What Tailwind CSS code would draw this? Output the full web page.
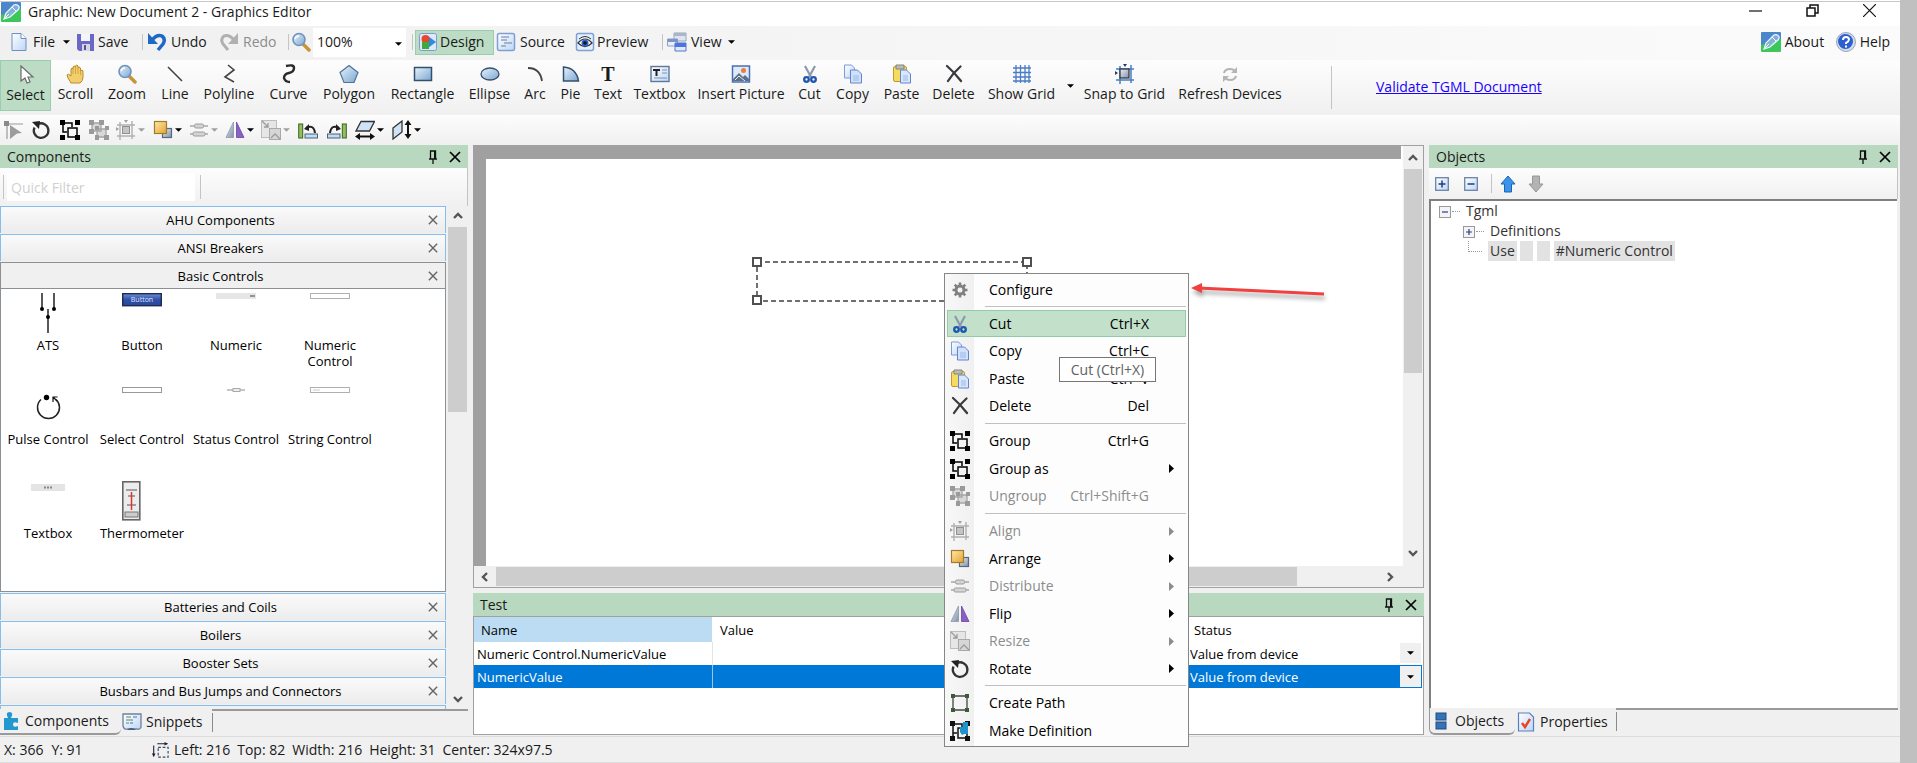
<!DOCTYPE html>
<html lang="en">
<head>
  <meta charset="UTF-8">
  <title>Graphic: New Document 2 - Graphics Editor</title>
  <script src="https://cdn.jsdelivr.net/npm/@tailwindcss/browser@4"></script>
</head>
<body class="flex h-screen overflow-hidden pr-[17px] bg-[#c0c0c0] font-['Open_Sans','Noto_Sans',sans-serif] text-[14px] leading-5 text-[#1a1a1a]">

  <!-- Icon sprite -->
  <svg class="absolute w-0 h-0" aria-hidden="true">
    <defs>
      <linearGradient id="gBlue" x1="0" y1="0" x2="1" y2="1"><stop offset="0" stop-color="#e8f3fc"/><stop offset="1" stop-color="#7ba6d2"/></linearGradient>
      <linearGradient id="gPage" x1="0" y1="0" x2="1" y2="1"><stop offset="0" stop-color="#ffffff"/><stop offset="1" stop-color="#bcd6f7"/></linearGradient>
      <linearGradient id="gGold" x1="0" y1="0" x2="1" y2="1"><stop offset="0" stop-color="#fdeaa8"/><stop offset="1" stop-color="#e3a32e"/></linearGradient>
      <linearGradient id="gGrey" x1="0" y1="0" x2="1" y2="1"><stop offset="0" stop-color="#eef1f5"/><stop offset="1" stop-color="#7f90a8"/></linearGradient>
      <linearGradient id="gBtn" x1="0" y1="0" x2="0" y2="1"><stop offset="0" stop-color="#6f8ed6"/><stop offset=".5" stop-color="#2f4fa8"/><stop offset="1" stop-color="#2a4698"/></linearGradient>
    </defs>
    <symbol id="app" viewBox="0 0 20 20"><path d="M1 0h18a1 1 0 0 1 1 1v9L0 15V1a1 1 0 0 1 1-1z" fill="#4a88ca"/><path d="M0 13L20 7v12a1 1 0 0 1-1 1H1a1 1 0 0 1-1-1z" fill="#3cc75a"/><path d="M3 17l2-6 8-8q2-1 4 .5t.5 4L9 15z" fill="#8fb8e2" fill-opacity=".8" stroke="#eef6ff" stroke-width="1.200"/><path d="M3 17l5-5M11 5l4 4" stroke="#fff"/></symbol>
    <symbol id="new" viewBox="0 0 20 20"><path d="M3 1.500h9l5 5v12H3z" fill="url(#gPage)" stroke="#6f8fc0"/><path d="M12 1.500v5h5" fill="#fff" stroke="#6f8fc0"/></symbol>
    <symbol id="save" viewBox="0 0 20 20"><path d="M1 2h17v17H3l-2-2z" fill="#6a68c4"/><path d="M5 2h9v7H5z" fill="#f4f4fb"/><path d="M6 12h8v7H6z" fill="#d6d6e0"/><path d="M8 13h2v5H8z" fill="#55539f"/></symbol>
    <symbol id="undo" viewBox="0 0 20 20"><path d="M5 8q5-6 10-4 4 3 1 8l-5 6" fill="none" stroke="#1d69c5" stroke-width="3.500"/><path d="M1 1v11h10z" fill="#1d69c5"/></symbol>
    <symbol id="redo" viewBox="0 0 20 20"><path d="M15 8q-5-6-10-4-4 3-1 8l5 6" fill="none" stroke="#b0b0b0" stroke-width="3"/><path d="M19 1v11H9z" fill="#b0b0b0"/></symbol>
    <symbol id="zoom" viewBox="0 0 20 20"><path d="M12 12l6 6" stroke="#c79437" stroke-width="3.500" stroke-linecap="round"/><circle cx="8" cy="7.500" r="6" fill="url(#gBlue)" stroke="#6d93be" stroke-width="1.600"/><path d="M4 7q1-3 4-3" stroke="#fff" stroke-width="1.500" fill="none"/></symbol>
    <symbol id="design" viewBox="0 0 20 20"><rect x="1.500" y="1.500" width="17" height="17" rx="2" fill="#dbe9fb" stroke="#7c9ccb"/><path d="M10 4l8 6-8 6z" fill="#2b8be6"/><circle cx="7.500" cy="7" r="4" fill="#e8472b"/><rect x="4" y="10" width="7" height="7" fill="#3eaa3a"/></symbol>
    <symbol id="source" viewBox="0 0 20 20"><rect x="1.500" y="1.500" width="17" height="17" rx="2" fill="url(#gPage)" stroke="#7fa0d4" stroke-width="1.500"/><path d="M5 5h8M5 8h6M8 11h8M5 14h5" stroke="#6a7f9f" stroke-width="1.200"/></symbol>
    <symbol id="preview" viewBox="0 0 20 20"><rect x="1.500" y="1.500" width="17" height="17" rx="2" fill="#e3effc" stroke="#7fa0d4" stroke-width="1.500"/><path d="M3 11q7-8 14 0-7 7-14 0z" fill="#fff" stroke="#333" stroke-width="1.200"/><path d="M4 7q6-5 12 0" fill="none" stroke="#333"/><circle cx="10" cy="11" r="3.500" fill="#2a66c8"/><circle cx="10" cy="11" r="1.800" fill="#111"/></symbol>
    <symbol id="view" viewBox="0 0 20 20"><path d="M7 1h12v8H7z" fill="#dfe5ee" stroke="#98a5ba"/><path d="M7 1h12v3H7z" fill="#a9b5c8"/><path d="M.500 7h10v7H.500z" fill="#eaf0fa" stroke="#8b9fc4"/><path d="M1 7h10v3H1z" fill="#7d95c6"/><path d="M8 11h11v8H8z" fill="#dfeaff" stroke="#5376c4"/><path d="M8 11h11v4H8z" fill="#4d74e0"/></symbol>
    <symbol id="help" viewBox="0 0 20 20"><circle cx="10" cy="10" r="9.500" fill="#d5dbe6" stroke="#9aa6bd" stroke-width="1"/><circle cx="9.500" cy="9.500" r="7.500" fill="#2c5fd0"/><path d="M7 8q0-3 3-3t3 2.500q0 1.500-3 3.500v1M10 13.500v2" fill="none" stroke="#fff" stroke-width="2"/></symbol>
    <symbol id="select" viewBox="0 0 20 20"><path d="M5 1v15l4-3 2 5 3-1-2-5h5z" fill="#fff" stroke="#6a6a6a" stroke-width="1.200"/></symbol>
    <symbol id="scroll" viewBox="0 0 20 20"><path d="M5 19q-4-6-4-8 1-2 4 1V5q1-2 2 0V3q1-2 2.500 0V2q1.500-2 2.500 0v2q1-2 2.500 0v3q2-2 2.500 0v6q0 4-3 6z" fill="#f3cf6c" stroke="#b98a2d"/><path d="M7 5v5M9.500 3v7M12 4v6M14.500 6v5" stroke="#c99b3c" stroke-width=".8"/></symbol>
    <symbol id="line" viewBox="0 0 20 20"><path d="M3 3l14 14" stroke="#444" stroke-width="1.600"/></symbol>
    <symbol id="polyline" viewBox="0 0 20 20"><path d="M9 1l6 5-9 7 9 5" fill="none" stroke="#444" stroke-width="1.600"/></symbol>
    <symbol id="curve" viewBox="0 0 20 20"><path d="M7 2q8-2 8 2 0 4-5 5-5 1-5 5 1 4 6 4" fill="none" stroke="#2b2b2b" stroke-width="2.400"/></symbol>
    <symbol id="polygon" viewBox="0 0 20 20"><path d="M10 1.500l9 7-4 10H5L1 8.500z" fill="url(#gBlue)" stroke="#4f7396" stroke-width="1.200"/></symbol>
    <symbol id="rect" viewBox="0 0 20 20"><rect x="1.500" y="3.500" width="17" height="13" fill="url(#gBlue)" stroke="#35506f" stroke-width="1.500"/></symbol>
    <symbol id="ellipse" viewBox="0 0 20 20"><ellipse cx="10" cy="10" rx="9" ry="6" fill="url(#gBlue)" stroke="#35506f" stroke-width="1.300"/></symbol>
    <symbol id="arc" viewBox="0 0 20 20"><path d="M3 4q12 0 14 13" fill="none" stroke="#444" stroke-width="1.800"/></symbol>
    <symbol id="pie" viewBox="0 0 20 20"><path d="M2.500 3q13 1 15 14h-15z" fill="url(#gBlue)" stroke="#35506f" stroke-width="1.500"/></symbol>
    <symbol id="textbox" viewBox="0 0 20 20"><rect x="1" y="2.500" width="18" height="15" fill="url(#gPage)" stroke="#5d7899" stroke-width="1.400"/><path d="M3 5h7v2H7.500v5h-2V7H3z" fill="#222"/><path d="M12 6h5M12 9h5M4 14h13" stroke="#7b93b3"/></symbol>
    <symbol id="picture" viewBox="0 0 20 20"><rect x="1.500" y="2" width="17" height="16" fill="#dceafa" stroke="#4a70ad" stroke-width="1.500"/><path d="M2 15l6-6 4 4 2-2 4 4v2H2z" fill="#5e6f88"/><path d="M4 16l4-4 6 5" stroke="#e9eef5" fill="none"/><circle cx="12.500" cy="6.500" r="2.500" fill="#ef7b3e"/></symbol>
    <symbol id="cut" viewBox="0 0 20 20"><path d="M5 2l6 11M15 2L9 13" stroke="#8c99ab" stroke-width="2.200"/><circle cx="6.500" cy="15.500" r="2.300" fill="none" stroke="#1f57b0" stroke-width="2.300"/><circle cx="13.500" cy="15.500" r="2.300" fill="none" stroke="#1f57b0" stroke-width="2.300"/></symbol>
    <symbol id="copy" viewBox="0 0 20 20"><path d="M1.500 1h7l3 3v10h-10z" fill="url(#gPage)" stroke="#7c9ad6"/><path d="M7.500 6h7l4 4v9h-11z" fill="#cfe1fb" stroke="#6484cb"/><path d="M10 12h6M10 14h6M10 16h6" stroke="#9db7e6"/></symbol>
    <symbol id="paste" viewBox="0 0 20 20"><rect x="1.500" y="2.500" width="13" height="15" rx="1.500" fill="#f7da60" stroke="#bf9a2c"/><path d="M4 1h8v4H4z" fill="#b9bcb4" stroke="#84877e"/><path d="M8.500 6h6l4 4v9h-10z" fill="#d8e7fc" stroke="#6484cb"/><path d="M11 12h5M11 14h5M11 16h5" stroke="#9db7e6"/></symbol>
    <symbol id="delete" viewBox="0 0 20 20"><path d="M3 2q7 6 14 15M16.500 2.500Q9 9 4 17" fill="none" stroke="#3a3a3e" stroke-width="2.300" stroke-linecap="round"/></symbol>
    <symbol id="grid" viewBox="0 0 20 20"><path d="M1 4h18M1 8.500h18M1 13h18M1 17h18M4 1v18M8.500 1v18M13 1v18M17 1v18" stroke="#4a7cc6" stroke-width="1.300"/></symbol>
    <symbol id="snap" viewBox="0 0 20 20"><path d="M1 5h18M1 16h18M5 2v18M16 1v18" stroke="#4a7cc6" stroke-width="1.500"/><rect x="5" y="5" width="9" height="9" fill="url(#gGrey)" stroke="#333a44" stroke-width="1.300"/><path d="M8 0h4l-2 3zM0 7v4l3-2z" fill="#1d3d77"/></symbol>
    <symbol id="refresh" viewBox="0 0 20 20"><path d="M4 9q1-4 6-4 3 0 5 2M16 12q-1 4-6 4-3 0-5-2" fill="none" stroke="#b4b4b4" stroke-width="2.200"/><path d="M17 3v6h-6zM3 18v-6h6z" fill="#b4b4b4"/></symbol>
    <symbol id="node" viewBox="0 0 20 20"><path d="M4 4h16M4 4v15" stroke="#9a9a9a" stroke-width="1.200"/><path d="M1 1h5v5H1z" fill="#8a8a8a"/><path d="M7 5l12 8-5 .5-7 5.500z" fill="#9c9c9c"/></symbol>
    <symbol id="rotate" viewBox="0 0 20 20"><path d="M7 4A7.300 7.300 0 1 1 3.500 7.500" fill="none" stroke="#333" stroke-width="2.300"/><path d="M1 2l8-1-1 8z" fill="#222"/></symbol>
    <symbol id="group" viewBox="0 0 20 20"><path d="M3 3h9v4M3 3v9h4" fill="none" stroke="currentColor" stroke-width="1.500"/><rect x="8" y="8" width="9" height="9" fill="none" stroke="currentColor" stroke-width="1.500"/><path d="M0 0h5v5H0zM15 0h5v5h-5zM0 15h5v5H0zM15 15h5v5h-5z" fill="currentColor"/></symbol>
    <symbol id="ungroup" viewBox="0 0 20 20"><path d="M3 3h9v8H3zM8 9h9v8H8z" fill="#d8d8d8" stroke="#a5a5a5" stroke-width="1.300"/><path d="M0 0h5v5H0zM10 0h5v5h-5zM0 9h5v5H0zM6 6h4v4H6zM16 6h4v4h-4zM6 15h4v5H6zM15 15h5v5h-5z" fill="#9a9a9a"/></symbol>
    <symbol id="align" viewBox="0 0 20 20"><path d="M1 5h18M1 16h18M4 2v18M16 1v18" stroke="#b0b0b0" stroke-width="1.400"/><rect x="6.500" y="6.500" width="7" height="7" fill="#c4c4c4" stroke="#909090"/><path d="M8 0h4l-2 3zM0 7v4l3-2z" fill="#a0a0a0"/></symbol>
    <symbol id="arrange" viewBox="0 0 20 20"><rect x="9.500" y="8.500" width="9" height="9" fill="url(#gGrey)" stroke="#59677c" stroke-width="1.200"/><rect x="1.500" y="1.500" width="12" height="12" fill="url(#gGold)" stroke="#a67a2b" stroke-width="1.200"/></symbol>
    <symbol id="distribute" viewBox="0 0 20 20"><path d="M1 6h18M1 14h18" stroke="#a8a8a8" stroke-width="1.400"/><rect x="5.500" y="4" width="9" height="4" rx="1.500" fill="#d4d4d4" stroke="#9c9c9c"/><rect x="4" y="12" width="12" height="4" rx="1.500" fill="#d4d4d4" stroke="#9c9c9c"/></symbol>
    <symbol id="flip" viewBox="0 0 20 20"><path d="M8.500 2v15.500H1z" fill="url(#gGrey)" stroke="#8b97a8" stroke-width=".8"/><path d="M11.500 2v15.500H19z" fill="#8a5fc4" stroke="#6a42a6" stroke-width=".8"/></symbol>
    <symbol id="resize" viewBox="0 0 20 20"><rect x=".5" y=".5" width="15" height="17" fill="#e6e6e6" stroke="#bdbdbd"/><rect x="8.500" y="8.500" width="11" height="11" fill="#d6d6d6" stroke="#a9a9a9"/><path d="M1 1l6 6M7 3v4H3M10 18l4-4 5 5" stroke="#9c9c9c" fill="none" stroke-width="1.300"/></symbol>
    <symbol id="rotl" viewBox="0 0 20 20"><rect x=".7" y="4" width="4" height="14" fill="#8fc25a" stroke="#3f5e2c"/><rect x="7" y="14" width="12.500" height="4" fill="#bfdcf5" stroke="#4b6078"/><path d="M8 8q8-4 9 5" fill="none" stroke="#222" stroke-width="2"/><path d="M6 9l5-5v7z" fill="#222"/></symbol>
    <symbol id="rotr" viewBox="0 0 20 20"><rect x="15.300" y="4" width="4" height="14" fill="#8fc25a" stroke="#3f5e2c"/><rect x=".5" y="14" width="12.500" height="4" fill="#bfdcf5" stroke="#4b6078"/><path d="M12 8Q4 4 3 13" fill="none" stroke="#222" stroke-width="2"/><path d="M14 9L9 4v7z" fill="#222"/></symbol>
    <symbol id="skewx" viewBox="0 0 20 20"><path d="M6 1.500h13.500l-5 9.500H1z" fill="#cfe3f8" stroke="#333" stroke-width="1.300"/><path d="M3 16.500h14" stroke="#111" stroke-width="2"/><path d="M0 16.500l5-3.500v7zM20 16.500l-5-3.500v7z" fill="#111"/></symbol>
    <symbol id="skewy" viewBox="0 0 20 20"><path d="M1 8l9-7v11l-9 7z" fill="#cfe3f8" stroke="#333" stroke-width="1.300"/><path d="M16 3v13" stroke="#111" stroke-width="2"/><path d="M16 0l-3.500 5h7zM16 19l-3.500-5h7z" fill="#111"/></symbol>
    <symbol id="path" viewBox="0 0 20 20"><path d="M3 3h14v14H3z" fill="none" stroke="#444" stroke-width="1.300"/><path d="M1 1h4v4H1zM15 1h4v4h-4zM1 15h4v4H1zM15 15h4v4h-4z" fill="#3d5a3a"/></symbol>
    <symbol id="gear" viewBox="0 0 20 20"><circle cx="10" cy="10" r="4" fill="none" stroke="#808080" stroke-width="3"/><path d="M10 2.500v3M10 14.500v3M2.500 10h3M14.500 10h3M4.700 4.700l2 2M13.300 13.300l2 2M15.300 4.700l-2 2M6.700 13.300l-2 2" stroke="#808080" stroke-width="2.600"/></symbol>
    <symbol id="makedef" viewBox="0 0 20 20"><path d="M3 3h9v4M3 3v9h4M3 12v5" fill="none" stroke="#111" stroke-width="1.500"/><path d="M8 7h9v10H8z" fill="none" stroke="#111" stroke-width="1.500"/><path d="M0 0h5v5H0zM15 0h5v5h-5zM0 15h5v5H0zM15 15h5v5h-5z" fill="#111"/><path d="M13 1h5v12h-4l-2 1-2-3V6h3z" fill="#1f93cc"/></symbol>
    <symbol id="puzzle" viewBox="0 0 20 20"><path d="M3 7h4Q4 1 8.500 1T10 7h7v5q-5-2-5 1.500t5 1.500v4H3z" fill="#2398cf"/></symbol>
    <symbol id="snippet" viewBox="0 0 20 20"><path d="M1 2h18v13q-1 3-4 2H6q-4 1-5-3z" fill="url(#gPage)" stroke="#6d7f9d" stroke-width="1.300"/><path d="M4 5h5M4 8h7M4 11h3" stroke="#5c8b5c"/><path d="M8 11h3M11 5h4" stroke="#4c6db0"/><path d="M5 18q4-4 9 0z" fill="#4a5d80"/></symbol>
    <symbol id="objects" viewBox="0 0 20 20"><rect x="5" y="2" width="10" height="7" fill="#3573b5" stroke="#1f4c80"/><rect x="5" y="11" width="10" height="7" fill="#3573b5" stroke="#1f4c80"/></symbol>
    <symbol id="props" viewBox="0 0 20 20"><path d="M2.500 1h11l4 4v14h-15z" fill="url(#gPage)" stroke="#5a7fc0" stroke-width="1.200"/><path d="M6 11l3 4 5-8" fill="none" stroke="#e8452a" stroke-width="2.500"/></symbol>
    <symbol id="bounds" viewBox="0 0 20 20"><path d="M3 5v11M7 3h11" stroke="#223" stroke-width="1.200"/><path d="M1 14h4l-2 4zM15 1l4 2-4 2z" fill="#223"/><rect x="8" y="7" width="11" height="11" fill="none" stroke="#334a66" stroke-width="1.300" stroke-dasharray="3 2"/></symbol>
    <symbol id="pin" viewBox="0 0 12 14"><path d="M3.500 1h5v8h-5zM2 9h8M6 9v5" fill="none" stroke="#111" stroke-width="1.300"/><path d="M7 1h2v8H7z" fill="#111"/></symbol>
    <symbol id="x" viewBox="0 0 12 12"><path d="M1 1l10 10M11 1L1 11" stroke="currentColor" stroke-width="1.700"/></symbol>
    <symbol id="down" viewBox="0 0 8 4"><path d="M0 0h8L4 4z" fill="currentColor"/></symbol>
    <symbol id="right" viewBox="0 0 5 9"><path d="M0 0v9l5-4.500z" fill="currentColor"/></symbol>
    <symbol id="chev" viewBox="0 0 10 10"><path d="M1 7l4-4 4 4" fill="none" stroke="#555" stroke-width="2.400"/></symbol>
    <symbol id="plus" viewBox="0 0 14 14"><rect x=".7" y=".7" width="12.600" height="12.600" fill="url(#gPage)" stroke="#6a83a6" stroke-width="1.300"/><path d="M3.500 7h7M7 3.500v7" stroke="#1c3f85" stroke-width="1.500"/></symbol>
    <symbol id="minus" viewBox="0 0 14 14"><rect x=".7" y=".7" width="12.600" height="12.600" fill="url(#gPage)" stroke="#6a83a6" stroke-width="1.300"/><path d="M3.500 7h7" stroke="#1c3f85" stroke-width="1.500"/></symbol>
    <symbol id="treeplus" viewBox="0 0 12 12"><rect x=".5" y=".5" width="11" height="11" fill="#f4f4f4" stroke="#999"/><path d="M3 6h6M6 3v6" stroke="#2a3f8f" stroke-width="1.200"/></symbol>
    <symbol id="treeminus" viewBox="0 0 12 12"><rect x=".5" y=".5" width="11" height="11" fill="#f4f4f4" stroke="#999"/><path d="M3 6h6" stroke="#2a3f8f" stroke-width="1.200"/></symbol>
    <symbol id="arrowup" viewBox="0 0 16 18"><path d="M8 1l7 8h-3.500v8h-7V9H1z" fill="#3a94ea" stroke="#1c63b8"/></symbol>
    <symbol id="arrowdn" viewBox="0 0 16 18"><path d="M8 17l7-8h-3.500V1h-7v8H1z" fill="#b3b3b3" stroke="#989898"/></symbol>
  </svg>

  <div class="flex-1 min-w-0 flex flex-col bg-[#f0f0f0]">

    <!-- Title bar -->
    <div class="h-px shrink-0 bg-white"></div>
    <header class="h-[25px] shrink-0 bg-white border-t border-[#c8c8c8] flex items-center pr-6 pb-1">
      <svg class="w-5 h-5 ml-px"><use href="#app"/></svg>
      <h1 class="ml-[7px] flex-1">Graphic: New Document 2 - Graphics Editor</h1>
      <div class="flex items-center gap-[44px] pb-1">
        <button aria-label="Minimize"><svg class="w-[13px] h-[13px]" viewBox="0 0 13 13"><path d="M0 7h13" stroke="#111" stroke-width="1.200"/></svg></button>
        <button aria-label="Restore"><svg class="w-[13px] h-[13px]" viewBox="0 0 13 13"><path d="M1 4h8v8H1zM4 4V1h8v8H9" fill="none" stroke="#111" stroke-width="1.500"/></svg></button>
        <button aria-label="Close"><svg class="w-[13px] h-[13px]" viewBox="0 0 13 13"><path d="M0 0l13 13M13 0L0 13" stroke="#111" stroke-width="1.200"/></svg></button>
      </div>
    </header>

    <!-- Menu row -->
    <nav class="h-[34px] shrink-0 flex items-center bg-linear-to-r from-[#f0f0f0] to-[#fbfbfb] pr-[10px] pb-[2px] whitespace-nowrap">
      <button class="w-[67px] ml-[9px] flex items-center gap-1"><svg class="w-5 h-5"><use href="#new"/></svg>File<svg class="w-[7px] h-1 ml-1 text-black"><use href="#down"/></svg></button>
      <button class="w-[66px] flex items-center gap-[2px]"><svg class="w-5 h-5"><use href="#save"/></svg>Save</button>
      <div class="w-px h-4 bg-[#c4c4c4]"></div>
      <button class="w-[72px] ml-1 flex items-center gap-1"><svg class="w-5 h-5"><use href="#undo"/></svg>Undo</button>
      <button class="w-[69px] flex items-center gap-1 text-[#8c8c8c]"><svg class="w-5 h-5"><use href="#redo"/></svg>Redo</button>
      <div class="w-px h-4 bg-[#c4c4c4]"></div>
      <label for="zoomLevel" class="ml-[2px] w-[22px]"><svg class="w-5 h-5"><use href="#zoom"/></svg></label>
      <div class="relative w-[93px] h-[29px] bg-white">
        <select id="zoomLevel" class="w-full h-full appearance-none pl-1 outline-none"><option>100%</option><option>200%</option></select>
        <svg class="absolute right-1 top-[14px] w-[7px] h-1 text-black pointer-events-none"><use href="#down"/></svg>
      </div>
      <div class="w-px h-4 bg-[#c4c4c4] ml-[6px]"></div>
      <button class="w-[79px] h-[25px] ml-[2px] pl-[2px] flex items-center gap-[2px] bg-[#bddcc5] border border-[#9accae]"><svg class="w-5 h-5"><use href="#design"/></svg>Design</button>
      <button class="w-[79px] ml-[2px] flex items-center gap-1"><svg class="w-5 h-5"><use href="#source"/></svg>Source</button>
      <button class="w-[87px] flex items-center gap-[2px]"><svg class="w-5 h-5"><use href="#preview"/></svg>Preview</button>
      <div class="w-px h-4 bg-[#c4c4c4]"></div>
      <button class="ml-1 flex items-center gap-1"><svg class="w-5 h-5"><use href="#view"/></svg>View<svg class="w-[7px] h-1 ml-[2px] text-black"><use href="#down"/></svg></button>
      <button class="w-[75px] ml-auto flex items-center gap-1"><svg class="w-5 h-5"><use href="#app"/></svg>About</button>
      <button class="flex items-center gap-1"><svg class="w-5 h-5"><use href="#help"/></svg>Help</button>
    </nav>

    <!-- Tools -->
    <div class="h-[55px] shrink-0 flex bg-linear-to-b from-[#fdfdfd] to-[#f0f0f0] whitespace-nowrap">
      <button class="w-[51px] h-[51px] pt-1 flex flex-col items-center bg-[#bddcc5] border border-[#9accae]"><svg class="w-5 h-5"><use href="#select"/></svg>Select</button>
      <button class="w-[49px] h-[51px] pt-1 flex flex-col items-center"><svg class="w-5 h-5"><use href="#scroll"/></svg>Scroll</button>
      <button class="w-[54px] h-[51px] pt-1 flex flex-col items-center"><svg class="w-5 h-5"><use href="#zoom"/></svg>Zoom</button>
      <button class="w-[42px] h-[51px] pt-1 flex flex-col items-center"><svg class="w-5 h-5"><use href="#line"/></svg>Line</button>
      <button class="w-[66px] h-[51px] pt-1 flex flex-col items-center"><svg class="w-5 h-5"><use href="#polyline"/></svg>Polyline</button>
      <button class="w-[53px] h-[51px] pt-1 flex flex-col items-center"><svg class="w-5 h-5"><use href="#curve"/></svg>Curve</button>
      <button class="w-[68px] h-[51px] pt-1 flex flex-col items-center"><svg class="w-5 h-5"><use href="#polygon"/></svg>Polygon</button>
      <button class="w-[79px] h-[51px] pt-1 flex flex-col items-center"><svg class="w-5 h-5"><use href="#rect"/></svg>Rectangle</button>
      <button class="w-[55px] h-[51px] pt-1 flex flex-col items-center"><svg class="w-5 h-5"><use href="#ellipse"/></svg>Ellipse</button>
      <button class="w-[36px] h-[51px] pt-1 flex flex-col items-center"><svg class="w-5 h-5"><use href="#arc"/></svg>Arc</button>
      <button class="w-[35px] h-[51px] pt-1 flex flex-col items-center"><svg class="w-5 h-5"><use href="#pie"/></svg>Pie</button>
      <button class="w-[40px] h-[51px] pt-1 flex flex-col items-center"><span class="h-5 font-['Liberation_Serif',serif] font-bold text-[20px]" aria-hidden="true">T</span>Text</button>
      <button class="w-[63px] h-[51px] pt-1 flex flex-col items-center"><svg class="w-5 h-5"><use href="#textbox"/></svg>Textbox</button>
      <button class="w-[100px] h-[51px] pt-1 flex flex-col items-center"><svg class="w-5 h-5"><use href="#picture"/></svg>Insert Picture</button>
      <button class="w-[37px] h-[51px] pt-1 flex flex-col items-center"><svg class="w-5 h-5"><use href="#cut"/></svg>Cut</button>
      <button class="w-[49px] h-[51px] pt-1 flex flex-col items-center"><svg class="w-5 h-5"><use href="#copy"/></svg>Copy</button>
      <button class="w-[49px] h-[51px] pt-1 flex flex-col items-center"><svg class="w-5 h-5"><use href="#paste"/></svg>Paste</button>
      <button class="w-[55px] h-[51px] pt-1 flex flex-col items-center"><svg class="w-5 h-5"><use href="#delete"/></svg>Delete</button>
      <button class="w-[81px] h-[51px] pt-1 flex flex-col items-center"><svg class="w-5 h-5"><use href="#grid"/></svg>Show Grid</button>
      <button class="w-[15px] h-[51px] pl-[5px]" aria-label="Grid options"><svg class="w-[7px] h-1 text-black"><use href="#down"/></svg></button>
      <button class="w-[95px] h-[51px] pt-1 flex flex-col items-center"><svg class="w-5 h-5"><use href="#snap"/></svg>Snap to Grid</button>
      <button class="w-[116px] h-[51px] pt-1 flex flex-col items-center"><svg class="w-5 h-5"><use href="#refresh"/></svg>Refresh Devices</button>
      <div class="w-px h-[43px] mt-[6px] ml-[43px] bg-[#c4c4c4]"></div>
      <a href="#" class="ml-11 mt-[17px] text-[#1a00ff] underline">Validate TGML Document</a>
    </div>

    <!-- Shape operations -->
    <div class="h-[30px] shrink-0 flex items-center bg-linear-to-b from-[#fdfdfd] to-[#f0f0f0] pl-[3px] text-black">
      <button class="w-7" aria-label="Edit points"><svg class="w-5 h-5"><use href="#node"/></svg></button>
      <button class="w-[29px]" aria-label="Rotate"><svg class="w-5 h-5"><use href="#rotate"/></svg></button>
      <button class="w-[29px]" aria-label="Group"><svg class="w-5 h-5"><use href="#group"/></svg></button>
      <button class="w-[27px]" aria-label="Ungroup"><svg class="w-5 h-5"><use href="#ungroup"/></svg></button>
      <button class="w-[37px] flex items-center gap-[2px] text-[#a0a0a0]" aria-label="Align"><svg class="w-5 h-5"><use href="#align"/></svg><svg class="w-[7px] h-1"><use href="#down"/></svg></button>
      <button class="w-9 flex items-center gap-[2px]" aria-label="Arrange"><svg class="w-5 h-5"><use href="#arrange"/></svg><svg class="w-[7px] h-1"><use href="#down"/></svg></button>
      <button class="w-9 flex items-center gap-[2px] text-[#a0a0a0]" aria-label="Distribute"><svg class="w-5 h-5"><use href="#distribute"/></svg><svg class="w-[7px] h-1"><use href="#down"/></svg></button>
      <button class="w-9 flex items-center gap-[2px]" aria-label="Flip"><svg class="w-5 h-5"><use href="#flip"/></svg><svg class="w-[7px] h-1"><use href="#down"/></svg></button>
      <button class="w-[37px] flex items-center gap-[2px] text-[#a0a0a0]" aria-label="Resize"><svg class="w-5 h-5"><use href="#resize"/></svg><svg class="w-[7px] h-1"><use href="#down"/></svg></button>
      <button class="w-[29px]" aria-label="Rotate left"><svg class="w-5 h-5"><use href="#rotl"/></svg></button>
      <button class="w-7" aria-label="Rotate right"><svg class="w-5 h-5"><use href="#rotr"/></svg></button>
      <button class="w-[37px] flex items-center gap-[2px]" aria-label="Skew horizontally"><svg class="w-5 h-5"><use href="#skewx"/></svg><svg class="w-[7px] h-1"><use href="#down"/></svg></button>
      <button class="w-[37px] flex items-center gap-[2px]" aria-label="Skew vertically"><svg class="w-5 h-5"><use href="#skewy"/></svg><svg class="w-[7px] h-1"><use href="#down"/></svg></button>
    </div>

    <div class="flex-1 min-h-0 flex gap-[5px] pr-[2px]">

      <!-- Components panel -->
      <aside class="w-[468px] shrink-0 flex flex-col">
        <div class="h-[23px] shrink-0 flex items-center bg-[#b9d8c0] px-[7px]">
          <h2 class="flex-1">Components</h2>
          <button aria-label="Pin" class="mr-[10px]"><svg class="w-3 h-[14px]"><use href="#pin"/></svg></button>
          <button aria-label="Close"><svg class="w-3 h-3 text-black"><use href="#x"/></svg></button>
        </div>
        <div class="h-[38px] shrink-0 flex items-center px-[3px] bg-linear-to-b from-[#fdfdfd] to-[#f0f0f0] border-r border-[#c4c4c4]">
          <div class="w-px h-6 bg-[#c4c4c4]"></div>
          <input type="text" aria-label="Quick Filter" placeholder="Quick Filter" class="w-[188px] h-7 ml-[3px] pl-1 bg-white outline-none placeholder:text-[#d0d0d0]">
          <div class="w-px h-6 bg-[#c4c4c4] ml-[5px]"></div>
        </div>
        <div class="flex-1 min-h-0 flex text-[13px] leading-4 text-black">
          <div class="w-[446px] flex flex-col gap-px">
            <div class="h-[27px] shrink-0 flex items-center border border-b-0 border-[#86bdec] bg-linear-to-b from-[#fafafa] to-[#ececec] pr-[7px]"><button class="flex-1 pl-3">AHU Components</button><button aria-label="Remove"><svg class="w-[10px] h-[10px] text-[#666]"><use href="#x"/></svg></button></div>
            <div class="h-[27px] shrink-0 flex items-center border border-b-0 border-[#86bdec] bg-linear-to-b from-[#fafafa] to-[#ececec] pr-[7px]"><button class="flex-1 pl-3">ANSI Breakers</button><button aria-label="Remove"><svg class="w-[10px] h-[10px] text-[#666]"><use href="#x"/></svg></button></div>
            <div class="flex-1 min-h-0 flex flex-col border border-[#8a9096] bg-white">
              <div class="h-[26px] shrink-0 flex items-center bg-[#f0f0f0] border-b border-[#8a9096] pr-[7px]"><button class="flex-1 pl-3">Basic Controls</button><button aria-label="Remove"><svg class="w-[10px] h-[10px] text-[#666]"><use href="#x"/></svg></button></div>
              <ul class="grid grid-cols-[repeat(4,94px)] auto-rows-[94px] pt-1 text-center">
                <li class="flex flex-col items-center gap-1"><svg class="w-10 h-10" viewBox="0 0 40 40"><path d="M14 0v16M26 0v16M20 16v24" stroke="#222" stroke-width="1.500"/><circle cx="14" cy="16" r="2"/><circle cx="26" cy="16" r="2"/><circle cx="20" cy="24" r="2"/></svg>ATS</li>
                <li class="flex flex-col items-center gap-1"><svg class="w-10 h-10" viewBox="0 0 40 40"><rect x=".7" y=".7" width="38.600" height="12" fill="url(#gBtn)" stroke="#1d2b4f" stroke-width="1.400"/><text x="20" y="9" font-size="7" fill="#dfe6fa" text-anchor="middle">Button</text></svg>Button</li>
                <li class="flex flex-col items-center gap-1"><svg class="w-10 h-10" viewBox="0 0 40 40"><path d="M0 0h40v6H0z" fill="#e6e6e6"/><path d="M34 3h5" stroke="#777" stroke-width="1.500"/></svg>Numeric</li>
                <li class="flex flex-col items-center gap-1"><svg class="w-10 h-10 shrink-0" viewBox="0 0 40 40"><rect x=".5" y=".5" width="39" height="5" fill="#fff" stroke="#b0b0b0"/></svg><span class="w-16">Numeric Control</span></li>
                <li class="flex flex-col items-center gap-1"><svg class="w-10 h-10" viewBox="0 0 40 40"><path d="M13 12.500a11 11 0 1 0 15 0" fill="none" stroke="#222" stroke-width="1.500"/><circle cx="18.500" cy="10.500" r="2.700"/><path d="M24.500 10h5M25 10v5M25 10l4 4" stroke="#111" stroke-width="1.200"/></svg>Pulse Control</li>
                <li class="flex flex-col items-center gap-1"><svg class="w-10 h-10" viewBox="0 0 40 40"><rect x=".5" y=".5" width="39" height="5" fill="#fff" stroke="#999"/></svg>Select Control</li>
                <li class="flex flex-col items-center gap-1"><svg class="w-10 h-10" viewBox="0 0 40 40"><path d="M11 3h18" stroke="#b5b5b5" stroke-width="1.500"/><rect x="17" y="1.500" width="7" height="3" fill="#eee" stroke="#aaa"/></svg>Status Control</li>
                <li class="flex flex-col items-center gap-1"><svg class="w-10 h-10" viewBox="0 0 40 40"><rect x=".5" y=".5" width="39" height="5" fill="#fff" stroke="#b0b0b0"/><path d="M3 3h7" stroke="#ccc"/></svg>String Control</li>
                <li class="flex flex-col items-center gap-1"><svg class="w-10 h-10" viewBox="0 0 40 40"><path d="M3 3h34v7H3z" fill="#e4e4e4"/><path d="M16 6.500h8" stroke="#888" stroke-width="2" stroke-dasharray="2 1"/></svg>Textbox</li>
                <li class="flex flex-col items-center gap-1"><svg class="w-10 h-10" viewBox="0 0 40 40"><rect x=".8" y=".8" width="17" height="38" fill="#ececec" stroke="#666" stroke-width="1.600"/><path d="M4 9h11M6 15h7M5 24h9" stroke="#555"/><path d="M9.500 11v18" stroke="#d33" stroke-width="1.500"/><rect x="3" y="31" width="13" height="5" fill="#ccc" stroke="#777"/></svg>Thermometer</li>
              </ul>
            </div>
            <div class="h-[27px] shrink-0 flex items-center border border-b-0 border-[#86bdec] bg-linear-to-b from-[#fafafa] to-[#ececec] pr-[7px]"><button class="flex-1 pl-3">Batteries and Coils</button><button aria-label="Remove"><svg class="w-[10px] h-[10px] text-[#666]"><use href="#x"/></svg></button></div>
            <div class="h-[27px] shrink-0 flex items-center border border-b-0 border-[#86bdec] bg-linear-to-b from-[#fafafa] to-[#ececec] pr-[7px]"><button class="flex-1 pl-3">Boilers</button><button aria-label="Remove"><svg class="w-[10px] h-[10px] text-[#666]"><use href="#x"/></svg></button></div>
            <div class="h-[27px] shrink-0 flex items-center border border-b-0 border-[#86bdec] bg-linear-to-b from-[#fafafa] to-[#ececec] pr-[7px]"><button class="flex-1 pl-3">Booster Sets</button><button aria-label="Remove"><svg class="w-[10px] h-[10px] text-[#666]"><use href="#x"/></svg></button></div>
            <div class="h-[27px] shrink-0 flex items-center border border-b-0 border-[#86bdec] bg-linear-to-b from-[#fafafa] to-[#ececec] pr-[7px]"><button class="flex-1 pl-3">Busbars and Bus Jumps and Connectors</button><button aria-label="Remove"><svg class="w-[10px] h-[10px] text-[#666]"><use href="#x"/></svg></button></div>
            <div class="h-1 shrink-0 border border-b-0 border-[#86bdec]"></div>
          </div>
          <div class="w-[19px] ml-[2px] flex flex-col items-center py-[5px]">
            <svg class="w-[10px] h-[10px] shrink-0"><use href="#chev"/></svg>
            <div class="w-full h-[185px] mt-[6px] bg-[#cdcdcd]"></div>
            <svg class="w-[10px] h-[10px] shrink-0 mt-auto rotate-180"><use href="#chev"/></svg>
          </div>
        </div>
        <div class="h-[27px] shrink-0 flex">
          <button class="h-[26px] w-[121px] flex items-center gap-1 pl-px border-b-2 border-[#9a9a9a] rounded-br-md"><svg class="w-5 h-5"><use href="#puzzle"/></svg>Components</button>
          <button class="h-[26px] w-[91px] flex items-center gap-1"><svg class="w-5 h-5 ml-px"><use href="#snippet"/></svg>Snippets</button>
          <div class="flex-1 border-t-2 border-[#9a9a9a]"><div class="w-px h-[19px] mt-[2px] bg-[#8a8a8a]"></div></div>
        </div>
      </aside>

      <!-- Drawing area and test panel -->
      <main class="relative flex-1 min-w-0 flex flex-col pb-px">
        <div class="flex-1 min-h-0 grid grid-cols-[1fr_22px] grid-rows-[1fr_21px] border border-[#a0a0a0]">
          <div class="pt-[13px] pl-3 bg-[#a0a0a0]">
            <div class="relative h-full bg-white">
              <svg class="absolute left-[260px] top-[90px] w-[600px] h-[64px]" viewBox="0 0 600 64">
                <path d="M11 13h270v39H11z" fill="none" stroke="#707070" stroke-width="2" stroke-dasharray="5 3"/>
                <path d="M7 9h8v8H7zM277 9h8v8h-8zM7 47h8v8H7z" fill="#fff" stroke="#505050" stroke-width="2"/>
              </svg>
            </div>
          </div>
          <div class="flex flex-col items-center pt-[7px] pb-2 border-l-2 border-white">
            <svg class="w-[10px] h-[10px] shrink-0"><use href="#chev"/></svg>
            <div class="w-[18px] h-[204px] mt-[6px] bg-[#cdcdcd]"></div>
            <svg class="w-[10px] h-[10px] shrink-0 mt-auto rotate-180"><use href="#chev"/></svg>
          </div>
          <div class="flex items-center pl-[6px] pr-[6px]">
            <svg class="w-[10px] h-[10px] shrink-0 -rotate-90"><use href="#chev"/></svg>
            <div class="w-[801px] h-[19px] ml-[6px] bg-[#cdcdcd]"></div>
            <svg class="w-[10px] h-[10px] shrink-0 ml-auto rotate-90"><use href="#chev"/></svg>
          </div>
          <div></div>
        </div>

        <div class="h-[23px] shrink-0 mt-[5px] flex items-center bg-[#b9d8c0] px-[7px]">
          <h2 class="flex-1">Test</h2>
          <button aria-label="Pin" class="mr-[10px]"><svg class="w-3 h-[14px]"><use href="#pin"/></svg></button>
          <button aria-label="Close"><svg class="w-3 h-3 text-black"><use href="#x"/></svg></button>
        </div>
        <div class="h-[119px] shrink-0 border border-[#a0a0a0] bg-white pr-px">
          <table class="w-full table-fixed text-left text-[13px] leading-4 text-black">
            <thead>
              <tr class="h-[25px]"><th class="w-[238px] pl-[7px] font-normal bg-[#bcdcf4]">Name</th><th class="pl-2 font-normal">Value</th><th class="w-[236px] pl-2 font-normal">Status</th></tr>
            </thead>
            <tbody>
              <tr class="h-[23px]">
                <td class="pl-[3px] border-r border-[#e4e4e4]">Numeric Control.NumericValue</td><td></td>
                <td class="relative"><select aria-label="Numeric Control status" class="w-full h-[22px] pl-1 appearance-none outline-none"><option>Value from device</option></select><span class="absolute right-px top-px w-[21px] h-5 bg-[#f0f0f0] flex items-center justify-center pointer-events-none"><svg class="w-[7px] h-1"><use href="#down"/></svg></span></td>
              </tr>
              <tr class="h-[23px] bg-[#0078d7] text-white">
                <td class="pl-[3px] border-r border-[#9cc4e4]">NumericValue</td><td></td>
                <td class="relative"><select aria-label="NumericValue status" class="w-full h-[22px] pl-1 appearance-none outline-none"><option>Value from device</option></select><span class="absolute right-px top-px w-[21px] h-[21px] bg-[#f0f0f0] text-black flex items-center justify-center pointer-events-none"><svg class="w-[7px] h-1"><use href="#down"/></svg></span></td>
              </tr>
            </tbody>
          </table>
        </div>

        <!-- Arrow pointing at Configure -->
        <svg class="absolute left-[715px] top-[134px] w-[150px] h-[32px] drop-shadow-[1px_4px_2px_rgba(0,0,0,0.35)]" viewBox="0 0 150 32"><path d="M10 9l126 6" stroke="#f04040" stroke-width="3"/><path d="M3 9l11-5v10z" fill="#f04040"/></svg>

        <!-- Context menu -->
        <div class="absolute left-[471px] top-[128px] w-[245px] py-[2px] px-[2px] border border-[#868686] bg-linear-to-r from-[#f8f8f8] from-0% via-[#f0f0f0] via-12% to-[#fdfdfd] to-12% text-black whitespace-nowrap z-10">
          <button class="w-full h-[27px] px-[3px] flex items-center"><svg class="w-5 h-5"><use href="#gear"/></svg><span class="ml-[19px]">Configure</span></button>
          <div class="h-[7px] ml-[38px] py-[3px]"><hr class="border-[#c0c0c0]"></div>
          <button class="w-full h-[27px] pl-[2px] pr-9 flex items-center bg-[#c3e0cb] border border-[#93cba8]"><svg class="w-5 h-5"><use href="#cut"/></svg><span class="ml-[19px] flex-1 text-left">Cut</span>Ctrl+X</button>
          <button class="w-full h-7 pl-[3px] pr-[37px] flex items-center"><svg class="w-5 h-5"><use href="#copy"/></svg><span class="ml-[19px] flex-1 text-left">Copy</span>Ctrl+C</button>
          <button class="w-full h-[27px] pl-[3px] pr-[37px] flex items-center"><svg class="w-5 h-5"><use href="#paste"/></svg><span class="ml-[19px] flex-1 text-left">Paste</span>Ctrl+V</button>
          <button class="w-full h-7 pl-[3px] pr-[37px] flex items-center"><svg class="w-5 h-5"><use href="#delete"/></svg><span class="ml-[19px] flex-1 text-left">Delete</span>Del</button>
          <div class="h-[7px] ml-[38px] py-[3px]"><hr class="border-[#c0c0c0]"></div>
          <button class="w-full h-7 pl-[3px] pr-[37px] flex items-center"><svg class="w-5 h-5"><use href="#group"/></svg><span class="ml-[19px] flex-1 text-left">Group</span>Ctrl+G</button>
          <button class="w-full h-[27px] pl-[3px] pr-3 flex items-center"><svg class="w-5 h-5"><use href="#group"/></svg><span class="ml-[19px] flex-1 text-left">Group as</span><svg class="w-[5px] h-[9px]"><use href="#right"/></svg></button>
          <button class="w-full h-7 pl-[3px] pr-[37px] flex items-center text-[#8c8c8c]"><svg class="w-5 h-5"><use href="#ungroup"/></svg><span class="ml-[19px] flex-1 text-left">Ungroup</span>Ctrl+Shift+G</button>
          <div class="h-[7px] ml-[38px] py-[3px]"><hr class="border-[#c0c0c0]"></div>
          <button class="w-full h-7 pl-[3px] pr-3 flex items-center text-[#8c8c8c]"><svg class="w-5 h-5"><use href="#align"/></svg><span class="ml-[19px] flex-1 text-left">Align</span><svg class="w-[5px] h-[9px]"><use href="#right"/></svg></button>
          <button class="w-full h-[27px] pl-[3px] pr-3 flex items-center"><svg class="w-5 h-5"><use href="#arrange"/></svg><span class="ml-[19px] flex-1 text-left">Arrange</span><svg class="w-[5px] h-[9px]"><use href="#right"/></svg></button>
          <button class="w-full h-7 pl-[3px] pr-3 flex items-center text-[#8c8c8c]"><svg class="w-5 h-5"><use href="#distribute"/></svg><span class="ml-[19px] flex-1 text-left">Distribute</span><svg class="w-[5px] h-[9px]"><use href="#right"/></svg></button>
          <button class="w-full h-[27px] pl-[3px] pr-3 flex items-center"><svg class="w-5 h-5"><use href="#flip"/></svg><span class="ml-[19px] flex-1 text-left">Flip</span><svg class="w-[5px] h-[9px]"><use href="#right"/></svg></button>
          <button class="w-full h-7 pl-[3px] pr-3 flex items-center text-[#8c8c8c]"><svg class="w-5 h-5"><use href="#resize"/></svg><span class="ml-[19px] flex-1 text-left">Resize</span><svg class="w-[5px] h-[9px]"><use href="#right"/></svg></button>
          <button class="w-full h-[27px] pl-[3px] pr-3 flex items-center"><svg class="w-5 h-5"><use href="#rotate"/></svg><span class="ml-[19px] flex-1 text-left">Rotate</span><svg class="w-[5px] h-[9px]"><use href="#right"/></svg></button>
          <div class="h-[7px] ml-[38px] py-[3px]"><hr class="border-[#c0c0c0]"></div>
          <button class="w-full h-7 px-[3px] flex items-center"><svg class="w-5 h-5"><use href="#path"/></svg><span class="ml-[19px]">Create Path</span></button>
          <button class="w-full h-[27px] px-[3px] flex items-center"><svg class="w-5 h-5"><use href="#makedef"/></svg><span class="ml-[19px]">Make Definition</span></button>
          <div role="tooltip" class="absolute left-[114px] top-[83px] w-[97px] h-[25px] border border-[#767676] bg-white text-center text-[#606060] leading-[23px]">Cut (Ctrl+X)</div>
        </div>
      </main>

      <!-- Objects panel -->
      <aside class="w-[469px] shrink-0 flex flex-col">
        <div class="h-[23px] shrink-0 flex items-center bg-[#b9d8c0] px-[7px]">
          <h2 class="flex-1">Objects</h2>
          <button aria-label="Pin" class="mr-[10px]"><svg class="w-3 h-[14px]"><use href="#pin"/></svg></button>
          <button aria-label="Close"><svg class="w-3 h-3 text-black"><use href="#x"/></svg></button>
        </div>
        <div class="h-[31px] shrink-0 flex items-center pl-[6px] bg-linear-to-b from-[#fdfdfd] to-[#f0f0f0] border-r border-[#c4c4c4]">
          <button aria-label="Expand all"><svg class="w-[14px] h-[14px]"><use href="#plus"/></svg></button>
          <button aria-label="Collapse all" class="ml-[15px]"><svg class="w-[14px] h-[14px]"><use href="#minus"/></svg></button>
          <div class="w-px h-[19px] ml-[13px] bg-[#c4c4c4]"></div>
          <button aria-label="Move up" class="ml-2"><svg class="w-4 h-[18px]"><use href="#arrowup"/></svg></button>
          <button aria-label="Move down" class="ml-3"><svg class="w-4 h-[18px]"><use href="#arrowdn"/></svg></button>
        </div>
        <div class="flex-1 min-h-0 bg-white border-t-2 border-l-2 border-[#7f7f7f] mr-px text-[#333]">
          <div class="h-5 flex items-center pl-2"><svg class="w-3 h-3 mt-[2px]"><use href="#treeminus"/></svg><span class="w-2 ml-px border-t border-dotted border-[#999]"></span><span class="ml-[6px]">Tgml</span></div>
          <div class="h-5 flex items-center pl-[32px]"><svg class="w-3 h-3 mt-[2px]"><use href="#treeplus"/></svg><span class="w-2 ml-px border-t border-dotted border-[#999]"></span><span class="ml-[6px]">Definitions</span></div>
          <div class="h-5 flex pl-[37px]"><span class="w-[14px] h-[11px] border-l border-b border-dotted border-[#999]"></span><span class="ml-[6px] px-[2px] bg-[#e2e2e2]">Use</span><span class="ml-[3px] w-[13px] bg-[#e2e2e2]"></span><span class="ml-1 w-[13px] bg-[#e2e2e2]"></span><span class="ml-1 px-[2px] whitespace-nowrap bg-[#e2e2e2]">#Numeric Control</span></div>
        </div>
        <div class="h-[28px] shrink-0 flex">
          <button class="h-[27px] w-[86px] flex items-center gap-1 pl-px border-l border-b-2 border-[#9a9a9a] rounded-b-md"><svg class="w-5 h-5"><use href="#objects"/></svg>Objects</button>
          <button class="h-[27px] w-[101px] flex items-center gap-1 pl-px"><svg class="w-5 h-5"><use href="#props"/></svg>Properties</button>
          <div class="flex-1 border-t-2 border-[#9a9a9a]"><div class="w-px h-[19px] mt-[2px] bg-[#8a8a8a]"></div></div>
        </div>
      </aside>
    </div>

    <!-- Status bar -->
    <footer class="h-[27px] shrink-0 flex items-center border-y border-[#dcdcdc] pl-1 whitespace-nowrap">
      <div class="w-[147px] flex gap-2"><span>X: 366</span><span>Y: 91</span></div>
      <svg class="w-[18px] h-[18px] mr-[5px]"><use href="#bounds"/></svg>
      <div class="flex gap-[7px]"><span>Left: 216</span><span>Top: 82</span><span>Width: 216</span><span>Height: 31</span><span>Center: 324x97.5</span></div>
    </footer>
  </div>
</body>
</html>
